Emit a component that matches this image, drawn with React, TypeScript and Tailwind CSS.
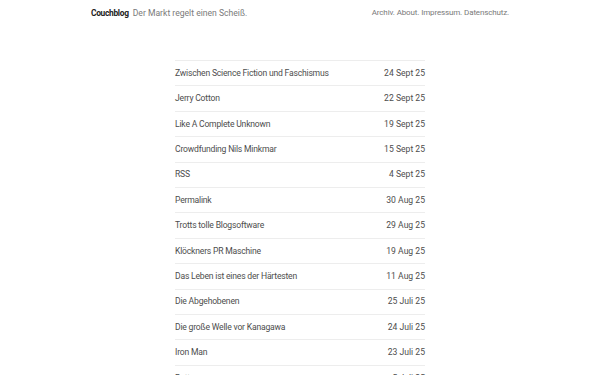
const posts = [
  { title: 'Zwischen Science Fiction und Faschismus', date: '24 Sept 25' },
  { title: 'Jerry Cotton', date: '22 Sept 25' },
  { title: 'Like A Complete Unknown', date: '19 Sept 25' },
  { title: 'Crowdfunding Nils Minkmar', date: '15 Sept 25' },
  { title: 'RSS', date: '4 Sept 25' },
  { title: 'Permalink', date: '30 Aug 25' },
  { title: 'Trotts tolle Blogsoftware', date: '29 Aug 25' },
  { title: 'Klöckners PR Maschine', date: '19 Aug 25' },
  { title: 'Das Leben ist eines der Härtesten', date: '11 Aug 25' },
  { title: 'Die Abgehobenen', date: '25 Juli 25' },
  { title: 'Die große Welle vor Kanagawa', date: '24 Juli 25' },
  { title: 'Iron Man', date: '23 Juli 25' },
  { title: 'Butter', date: '5 Juli 25' },
]

export default function App() {
  return (
    <div className="h-[375px] overflow-hidden bg-white font-['Roboto',sans-serif]">
      <header className="mx-auto flex w-[418px] items-center justify-between pt-[6px] leading-[14px]">
        <div className="flex items-baseline gap-[4px]">
          <span className="text-[8.4px] font-bold tracking-[-0.3px] text-[#222]">Couchblog</span>
          <span className="text-[8.6px] text-[#7a7a7a]">Der Markt regelt einen Scheiß.</span>
        </div>
        <nav className="flex gap-[2px] text-[8px] tracking-[-0.15px] text-[#7a7a7a]">
          <a>Archiv.</a>
          <a>About.</a>
          <a>Impressum.</a>
          <a>Datenschutz.</a>
        </nav>
      </header>

      <ul className="mx-auto mt-[40px] w-[250px]">
        {posts.map((post) => (
          <li
            key={post.title}
            className="flex h-[25.42px] items-center justify-between border-t border-[#ededed] text-[#4d4d4d]"
          >
            <span className="text-[8.6px] tracking-[-0.2px]">{post.title}</span>
            <span className="text-[8.6px]">{post.date}</span>
          </li>
        ))}
      </ul>
    </div>
  )
}
